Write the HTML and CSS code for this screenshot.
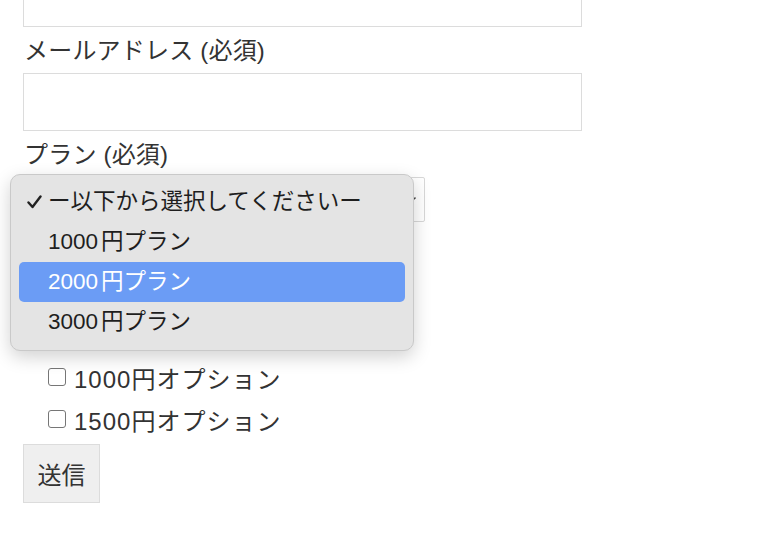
FILE: index.html
```html
<!DOCTYPE html>
<html lang="ja">
<head>
<meta charset="utf-8">
<link rel="stylesheet" href="styles.css">
</head>
<body>
<form class="form">
  <input class="text-input" type="text">
  <div class="label">メールアドレス (必須)</div>
  <input class="text-input" type="email">
  <div class="label">プラン (必須)</div>
  <div class="select-wrap">
    <div class="select">
      <svg class="chev" width="10" height="12" viewBox="0 0 10 12"><path d="M2 8.5 L7 4" stroke="#444" stroke-width="1.6" fill="none" stroke-linecap="round"/></svg>
    </div>
    <div class="menu">
      <div class="item checked">
        <svg class="check" width="15" height="14" viewBox="0 0 15 14"><path d="M1.5 7.5 L5.5 12 L13.5 1.5" stroke="#222" stroke-width="2.4" fill="none" stroke-linecap="round" stroke-linejoin="round"/></svg>
        <span>ー以下から選択してくださいー</span>
      </div>
      <div class="item">1000<span class="sp"></span>円プラン</div>
      <div class="item active">2000<span class="sp"></span>円プラン</div>
      <div class="item">3000<span class="sp"></span>円プラン</div>
    </div>
  </div>
  <div class="options">
    <label class="opt"><span class="box"></span>1000円オプション</label>
    <label class="opt"><span class="box"></span>1500円オプション</label>
  </div>
  <button class="submit" type="button">送信</button>
</form>
</body>
</html>
```
FILE: styles.css
```css
html, body {
  margin: 0;
  padding: 0;
  background: #fff;
  overflow: hidden;
}
body {
  font-family: "Liberation Sans", "Noto Sans CJK JP", sans-serif;
  color: #333;
  font-size: 24px;
  width: 768px;
  height: 543px;
}
.form {
  display: flex;
  flex-direction: column;
  align-items: flex-start;
  margin: -31px 0 0 23px;
}
.text-input {
  box-sizing: border-box;
  width: 559px;
  height: 58px;
  border: 1px solid #dcdcdc;
  background: #fff;
  margin: 0;
}
.label {
  height: 42px;
  line-height: 42px;
  margin: 3px 0 1px 1px;
  font-size: 24px;
  letter-spacing: 0.2px;
  color: #333;
}
.select-wrap {
  position: relative;
  width: 402px;
  height: 45px;
  margin-bottom: 134px;
}
.select {
  box-sizing: border-box;
  width: 100%;
  height: 100%;
  border: 1px solid #d8d8d8;
  border-radius: 2px;
  background: #fff;
  display: flex;
  align-items: center;
  justify-content: flex-end;
  padding-right: 6px;
}
.chev { display: block; }
.menu {
  position: absolute;
  top: -3px;
  left: -13px;
  width: 404px;
  box-sizing: border-box;
  padding: 7px 8px 8px;
  background: #e4e4e4;
  border: 1px solid #c9c9c9;
  border-radius: 10px;
  box-shadow: 0 6px 18px rgba(0,0,0,0.18);
  font-size: 22.5px;
  color: #1e1e1e;
}
.item {
  height: 40px;
  line-height: 40px;
  padding-left: 29px;
  border-radius: 5px;
  white-space: nowrap;
}
.item.checked {
  display: flex;
  align-items: center;
  padding-left: 8px;
}
.check {
  display: block;
  margin-right: 6px;
}
.item.active {
  background: #6b9cf5;
  color: #fff;
}
.sp { display: inline-block; width: 3px; }
.options {
  display: flex;
  flex-direction: column;
  margin-left: 25px;
}
.opt {
  display: flex;
  align-items: center;
  height: 42px;
  font-size: 24px;
  letter-spacing: 1px;
  color: #333;
}
.box {
  box-sizing: border-box;
  width: 18px;
  height: 18px;
  border: 1.5px solid #767676;
  border-radius: 3px;
  margin-right: 8px;
  background: #fff;
}
.submit {
  margin-top: 4px;
  box-sizing: border-box;
  width: 77px;
  height: 59px;
  border: 1px solid #dcdcdc;
  background: #efefef;
  font-family: "Liberation Sans", "Noto Sans CJK JP", sans-serif;
  font-size: 24px;
  color: #333;
  padding: 0;
}
```
